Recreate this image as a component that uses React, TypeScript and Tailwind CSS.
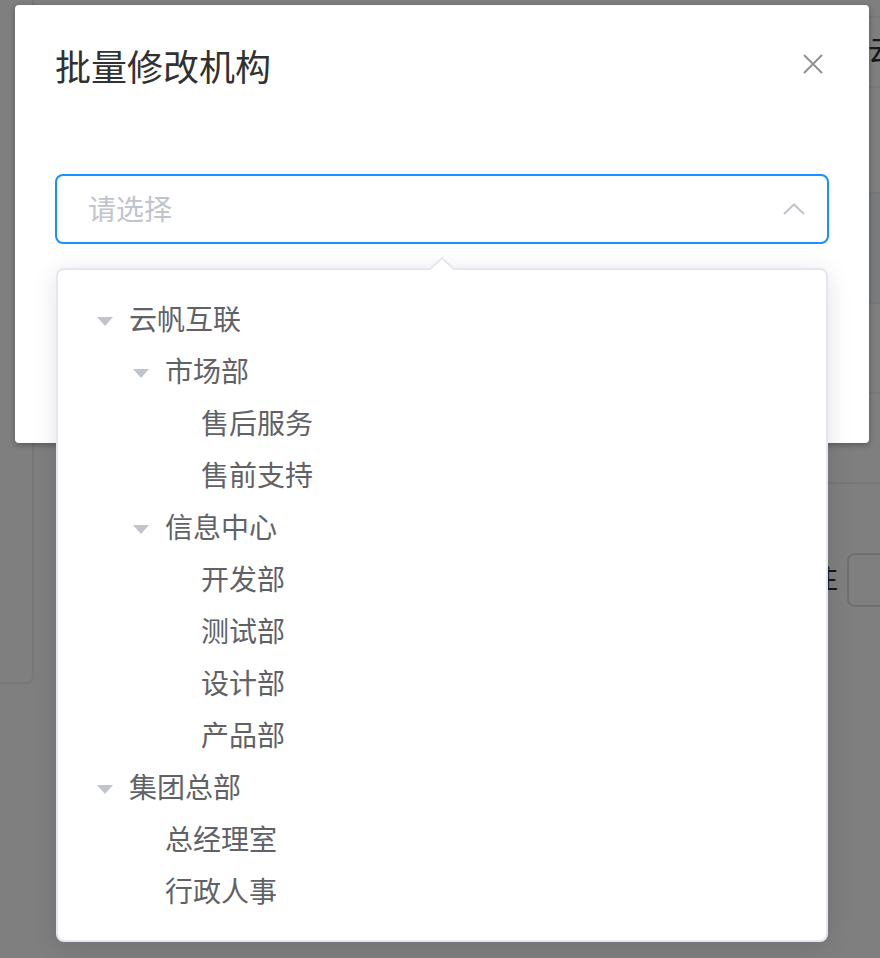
import React from "react";

type Node = { label: string; level: number; caret?: boolean };

const nodes: Node[] = [
  { label: "云帆互联", level: 1, caret: true },
  { label: "市场部", level: 2, caret: true },
  { label: "售后服务", level: 3 },
  { label: "售前支持", level: 3 },
  { label: "信息中心", level: 2, caret: true },
  { label: "开发部", level: 3 },
  { label: "测试部", level: 3 },
  { label: "设计部", level: 3 },
  { label: "产品部", level: 3 },
  { label: "集团总部", level: 1, caret: true },
  { label: "总经理室", level: 2 },
  { label: "行政人事", level: 2 },
];

const indent: Record<number, string> = {
  1: "pl-[23px]",
  2: "pl-[59px]",
  3: "pl-[95px]",
};

function Caret() {
  return (
    <svg width="16" height="9" viewBox="0 0 16 9">
      <polygon points="0,0 16,0 8,9" fill="#c0c4cc" />
    </svg>
  );
}

function BackgroundPage() {
  return (
    <div className="flex">
      <div className="w-[34px] h-[684px] shrink-0 border-r-2 border-b-2 border-[#ebeef5] rounded-br-lg" />
      <div className="flex-1 ml-[26px]">
        <div className="h-[18px] border-b-2 border-[#ebeef5]" />
        <div className="h-[70px] border-b-2 border-[#ebeef5] flex items-center">
          <div className="w-[808px] shrink-0" />
          <span className="text-[28px] text-[#303133] whitespace-nowrap">云帆互联</span>
        </div>
        <div className="h-[106px] border-b-2 border-[#ebeef5]" />
        <div className="h-[110px] border-b-2 border-[#ebeef5] bg-[#f5f7fa]" />
        <div className="h-[90px] border-b-2 border-[#ebeef5]" />
        <div className="h-[90px] border-b-2 border-[#ebeef5]" />
        <div className="mt-[69px] flex items-center">
          <div className="w-[712px] shrink-0" />
          <span className="text-[28px] text-[#303133] whitespace-nowrap w-[66px] text-right">备注</span>
          <div className="ml-[9px] w-[120px] h-[54px] shrink-0 border-2 border-[#dcdfe6] rounded-lg" />
        </div>
      </div>
    </div>
  );
}

export default function App() {
  return (
    <div className="relative w-[880px] h-[958px] overflow-hidden bg-white font-['Liberation_Sans','Noto_Sans_CJK_SC',sans-serif]">
      <BackgroundPage />
      <div className="absolute inset-0 bg-black/50" />

      {/* dialog */}
      <div className="absolute left-[15px] top-[5px] w-[854px] h-[438px] bg-white rounded-[4px] shadow-[0_2px_6px_rgba(0,0,0,0.3)] px-[40px] pt-[40px]">
        <div className="text-[36px] leading-[48px] text-[#303133]">批量修改机构</div>
        <button className="absolute right-[46px] top-[49px] w-[20px] h-[20px]">
          <svg width="20" height="20" viewBox="0 0 20 20">
            <path d="M1 1 L19 19 M19 1 L1 19" stroke="#909399" strokeWidth="2" fill="none" />
          </svg>
        </button>
        <div className="mt-[81px] h-[70px] border-2 border-[#1890ff] rounded-lg flex items-center pl-[31px] pr-[22px]">
          <span className="flex-1 text-[28px] text-[#c0c4cc] pt-[4px]">请选择</span>
          <svg width="22" height="12" viewBox="0 0 22 12">
            <polyline points="1,11 11,1.5 21,11" stroke="#c0c4cc" strokeWidth="2" fill="none" />
          </svg>
        </div>
      </div>

      {/* dropdown */}
      <div className="absolute left-[56px] top-[268px] w-[772px] h-[674px] bg-white border-2 border-[#e4e7ed] rounded-lg shadow-[0_4px_24px_rgba(0,0,0,0.12)] pt-[25px]">
        <svg className="absolute left-[371px] top-[-13px]" width="26" height="13" viewBox="0 0 26 13">
          <polygon points="0,13 13,1 26,13" fill="#fff" />
          <polyline points="0,13 13,1 26,13" fill="none" stroke="#e4e7ed" strokeWidth="2" />
        </svg>
        {nodes.map((n, i) => (
          <div key={i} className={`flex items-center h-[52px] ${indent[n.level]}`}>
            <div className="w-[48px] flex items-center justify-center">{n.caret && <Caret />}</div>
            <span className="text-[28px] text-[#606266]">{n.label}</span>
          </div>
        ))}
      </div>
    </div>
  );
}
